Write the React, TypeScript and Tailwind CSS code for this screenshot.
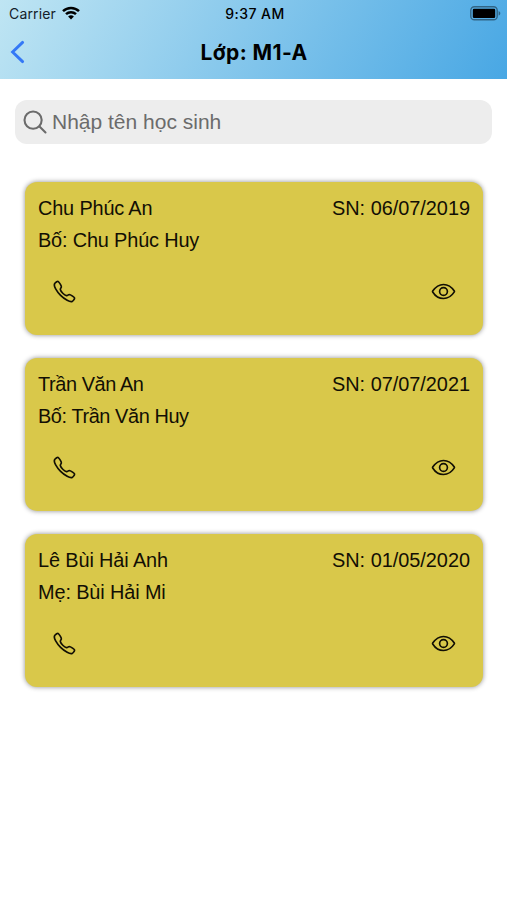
import { IoCallOutline, IoEyeOutline, IoSearchOutline } from 'react-icons/io5';

type Student = {
  id: number;
  name: string;
  birthday: string;
  parent: string;
  tracking: string;
};

const students: Student[] = [
  { id: 1, name: 'Chu Phúc An', birthday: '06/07/2019', parent: 'Bố: Chu Phúc Huy', tracking: 'tracking-[-0.16px]' },
  { id: 2, name: 'Trần Văn An', birthday: '07/07/2021', parent: 'Bố: Trần Văn Huy', tracking: 'tracking-[-0.4px]' },
  { id: 3, name: 'Lê Bùi Hải Anh', birthday: '01/05/2020', parent: 'Mẹ: Bùi Hải Mi', tracking: 'tracking-[-0.12px]' },
];

function WifiIcon() {
  return (
    <svg width="18" height="14" viewBox="0 0 18 14" fill="none" stroke="#000" strokeWidth="2.5">
      <path d="M1 5.1a11.6 11.6 0 0 1 16 0" />
      <path d="M4 8.2a7.3 7.3 0 0 1 10 0" />
      <path d="M9 13.6 6.1 10.6a4.2 4.2 0 0 1 5.8 0Z" fill="#000" stroke="none" />
    </svg>
  );
}

function BatteryIcon() {
  return (
    <svg width="31" height="15" viewBox="0 0 31 15">
      <rect x="0.8" y="0.8" width="26.4" height="13" rx="3.6" fill="none" stroke="#000" strokeOpacity="0.42" strokeWidth="1.4" />
      <rect x="2.8" y="2.7" width="22.4" height="9.2" rx="1.2" fill="#000" />
      <path d="M28.6 5v4.6c1-.4 1.7-1.3 1.7-2.3S29.6 5.4 28.6 5Z" fill="#000" fillOpacity="0.42" />
    </svg>
  );
}

function Header() {
  return (
    <header className="h-[79px] bg-[linear-gradient(120deg,#bfe5f3_0%,#48a7e4_100%)] font-['Inter',sans-serif] text-black">
      <div className="grid h-[26px] grid-cols-3 items-center pr-[6px] pl-[9px] text-[14px]">
        <div className="flex items-center gap-[6px] text-[#14202a]">
          <span className="tracking-[0.15px]">Carrier</span>
          <WifiIcon />
        </div>
        <span className="text-center text-[14px] font-medium tracking-[0.45px] whitespace-nowrap">9:37 AM</span>
        <div className="flex justify-end">
          <BatteryIcon />
        </div>
      </div>
      <div className="grid h-[52px] grid-cols-[60px_1fr_60px] items-center">
        <button type="button" aria-label="Quay lại" className="pl-[10px]">
          <svg width="15" height="24" viewBox="0 0 15 24" fill="none" stroke="#3478f6" strokeWidth="2.9">
            <path d="M12.6 2.4 2.6 12l10 9.6" strokeLinecap="round" strokeLinejoin="miter" />
          </svg>
        </button>
        <h1 className="pt-px pl-px text-center text-[21px] font-bold tracking-[0.4px]">Lớp: M1-A</h1>
      </div>
    </header>
  );
}

function StudentCard({ student }: { student: Student }) {
  return (
    <li className="flex h-[153px] flex-col rounded-[12px] bg-[#d9c84a] pt-[10px] pr-[13px] pl-[13px] shadow-[0_0_5px_rgba(0,0,0,0.45)]">
      <div className="flex justify-between leading-8">
        <span className={student.tracking}>{student.name}</span>
        <span className="tracking-[-0.02px]">SN: {student.birthday}</span>
      </div>
      <p className={`leading-8 ${student.tracking}`}>{student.parent}</p>
      <div className="mt-[23px] flex items-center justify-between px-[14px]">
        <button type="button" aria-label="Gọi">
          <IoCallOutline className="size-[25px] [&_*]:[stroke-width:34]" />
        </button>
        <button type="button" aria-label="Xem">
          <IoEyeOutline className="size-[25px] [&_*]:[stroke-width:34]" />
        </button>
      </div>
    </li>
  );
}

export default function App() {
  return (
    <div className="h-[900px] w-[507px] overflow-hidden bg-white font-['Liberation_Sans',Arial,sans-serif] text-[19.9px] text-[#120f04]">
      <Header />
      <div className="mr-[15px] ml-[15px] mt-[21px] flex h-[44px] items-center gap-[3px] rounded-[12px] bg-[#ededed] pl-[6px] text-[#6b6b6b]">
        <IoSearchOutline className="size-[28px] [&_*]:[stroke-width:38]" />
        <input
          type="text"
          placeholder="Nhập tên học sinh"
          className="flex-1 bg-transparent text-[21px] outline-none placeholder:text-[#6b6b6b]"
        />
      </div>
      <ul className="mt-[38px] flex flex-col gap-[23px] pr-[24px] pl-[25px]">
        {students.map((student) => (
          <StudentCard key={student.id} student={student} />
        ))}
      </ul>
    </div>
  );
}
